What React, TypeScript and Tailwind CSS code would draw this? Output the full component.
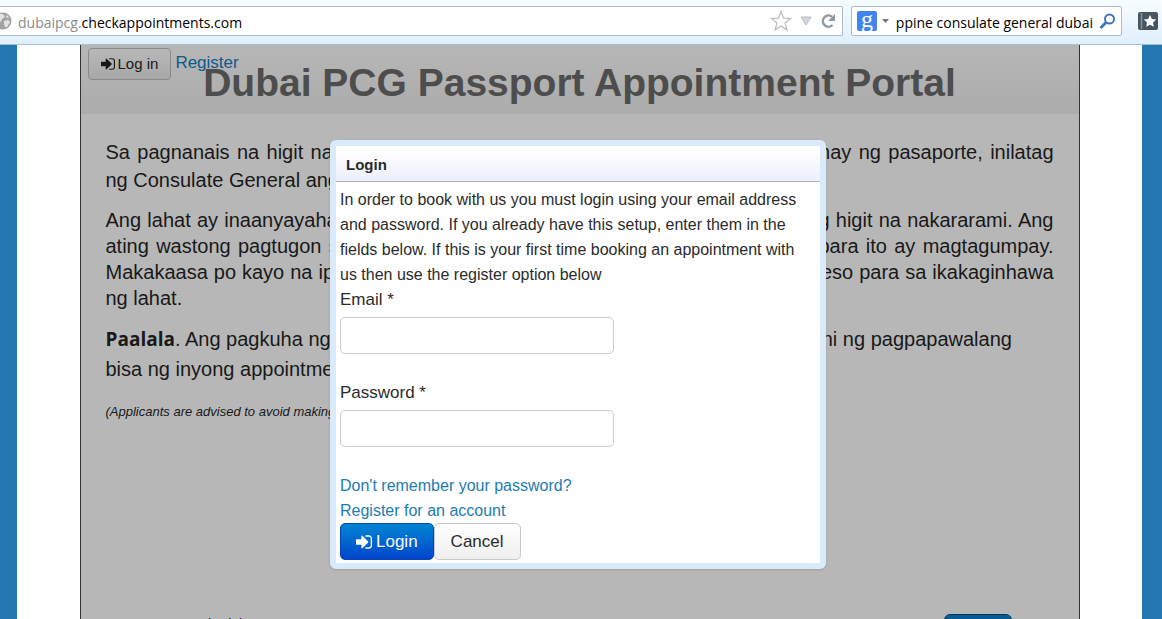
import type { ReactNode } from 'react';

interface IconProps {
    className?: string;
}

function SignInIcon({ className }: IconProps) {
    return (
        <svg viewBox="0 128 1536 1536" fill="currentColor" className={className} aria-hidden="true">
            <path d="M1184 896q0 26-19 45l-544 544q-19 19-45 19t-45-19-19-45v-288h-448q-26 0-45-19t-19-45v-384q0-26 19-45t45-19h448v-288q0-26 19-45t45-19 45 19l544 544q19 19 19 45zm352-352v704q0 119-84.5 203.5t-203.5 84.5h-320q-13 0-22.5-9.5t-9.5-22.5q0-4-1-20t-.5-26.5 3-23.5 10-19.5 20.5-6.5h320q66 0 113-47t47-113v-704q0-66-47-113t-113-47h-312l-11.5-1-11.5-3-8-5.5-7-9-2-13.5q0-4-1-20t-.5-26.5 3-23.5 10-19.5 20.5-6.5h320q119 0 203.5 84.5t84.5 203.5z" />
        </svg>
    );
}

function BrowserBar() {
    return (
        <header className="flex h-[45px] shrink-0 items-start border-b border-[#a9bfd0] bg-linear-to-b from-[#f6fdff] to-[#e0effc] pt-1.5 font-['Open_Sans',sans-serif] text-sm">
            <div className="flex h-[30px] flex-1 items-center rounded-r-xs border border-l-0 border-[#a9bccb] bg-white pr-1.5">
                <svg viewBox="0 0 18 18" className="-ml-1.5 h-[18px] w-[18px] shrink-0" aria-hidden="true">
                    <circle cx="9" cy="9" r="8.5" fill="#a3a3a3" />
                    <path d="M5 2l4 0 2 3-3 2-1 3-3-2-2-3zM10 9l4-1 2 2-3 5-2 0-1-3zM12 3l3 2-1 1-2-1z" fill="#e3e3e3" />
                </svg>
                <span className="ml-1.5 flex-1 pt-1 text-[#8b8b8b]">dubaipcg.<span className="text-black">checkappointments.com</span></span>
                <button aria-label="Bookmark">
                    <svg viewBox="0 0 22 22" className="h-[22px] w-[22px]" fill="#fdfdfd" stroke="#b9bbbd" strokeWidth="1.2">
                        <path d="M11 1.5l2.6 6.6 7 .3-5.5 4.5 1.9 7.1-6-4-6 4 1.9-7.1-5.5-4.5 7-.3z" />
                    </svg>
                </button>
                <button aria-label="History" className="ml-2">
                    <svg viewBox="0 0 12 10" className="h-2.5 w-3" fill="#d3d8de" stroke="#b7bcc4">
                        <path d="M1 1h10l-5 8z" />
                    </svg>
                </button>
                <button aria-label="Reload" className="ml-2">
                    <svg viewBox="0 0 16 16" className="h-4 w-4" fill="none" stroke="#929ba5" strokeWidth="2.5">
                        <path d="M12.5 12a5.6 5.6 0 1 1-.5-8.2" />
                        <path d="M15 1v7H8z" fill="#929ba5" stroke="none" />
                    </svg>
                </button>
            </div>
            <div className="ml-2 flex h-[30px] w-[271px] items-center rounded-xs border border-[#a9bccb] bg-white px-[5px]">
                <span className="flex h-5 w-5 shrink-0 items-center justify-center rounded-xs bg-[#4383f0] pb-1 font-['Liberation_Serif',serif] text-2xl leading-5 text-white">g</span>
                <svg viewBox="0 0 7 4" className="ml-[5px] h-1 w-[7px] shrink-0" fill="#777" aria-hidden="true">
                    <path d="M0 0h7L3.5 4z" />
                </svg>
                <div className="ml-1.5 flex min-w-0 flex-1 justify-end overflow-hidden pt-1 whitespace-nowrap text-black">ppine consulate general dubai</div>
                <button aria-label="Search" className="ml-1.5 shrink-0">
                    <svg viewBox="0 0 17 17" className="h-[17px] w-[17px]" fill="none" stroke="#3c78b4">
                        <circle cx="10.5" cy="6" r="4.5" strokeWidth="2" />
                        <path d="M7 9.5L1.5 15" strokeWidth="3" />
                    </svg>
                </button>
            </div>
            <button aria-label="Bookmarks" className="mt-1.5 ml-4 w-6">
                <svg viewBox="0 0 20 18" className="h-[18px] w-5">
                    <rect width="20" height="18" rx="2" fill="#475562" />
                    <path d="M3.5 1v16" stroke="#8795a2" strokeWidth="1.5" />
                    <path d="M12 3l1.9 4 4.3.5-3.2 3 .8 4.3-3.8-2.1-3.8 2.1.8-4.3-3.2-3 4.3-.5z" fill="#fff" />
                </svg>
            </button>
        </header>
    );
}

interface LineProps {
    start: string;
    gap: string;
    end: string;
}

function JustifiedLine({ start, gap, end }: LineProps) {
    return (
        <span className="block text-justify [text-align-last:justify]">
            {start} <span className={`inline-block ${gap}`} /> {end}
        </span>
    );
}

function PortalPage() {
    return (
        <section className="mx-auto min-h-full max-w-[1000px] border-x border-[#333] bg-[#b7b7b7] text-[#191919]">
            <div className="relative h-[69px] rounded-t-md bg-linear-to-b from-[#b6b6b6] to-[#acacac]">
                <h1 className="pt-4 text-center text-[39px] leading-11 font-bold text-[#4d4d4d]">Dubai PCG Passport Appointment Portal</h1>
                <div className="absolute top-[3px] left-[7px] flex items-start gap-1">
                    <button className="flex h-8 items-center gap-[3px] rounded-sm border border-[#8a8a8a] bg-linear-to-b from-[#b8b8b8] to-[#a8a8a8] px-3 text-[15px]">
                        <SignInIcon className="h-3.5 w-3.5" />
                        Log in
                    </button>
                    <a href="#register" className="pt-[3px] text-[17px] leading-6 text-[#0c5b89]">Register</a>
                </div>
            </div>
            <article className="px-[25px] pt-6 text-xl">
                <p className="leading-7">
                    <JustifiedLine start="Sa pagnanais na higit na" gap="w-[466px]" end="may ng pasaporte, inilatag" />
                    ng Consulate General ang
                </p>
                <p className="mt-[13px] leading-[26px]">
                    <JustifiedLine start="Ang lahat ay inaanyayahan" gap="w-[446px]" end="ng higit na nakararami. Ang" />
                    <JustifiedLine start="ating wastong pagtugon sa" gap="w-[454px]" end="para ito ay magtagumpay." />
                    <JustifiedLine start="Makakaasa po kayo na ip" gap="w-[436px]" end="proseso para sa ikakaginhawa" />
                    ng lahat.
                </p>
                <p className="mt-[13px] leading-[30px]">
                    <b className="font-['Open_Sans',sans-serif] text-[19px]">Paalala</b>. Ang pagkuha ng <span className="inline-block w-[480px]" /> ni ng pagpapawalang
                    <br />
                    bisa ng inyong appointment
                </p>
                <p className="mt-4 text-[13px] leading-6 italic">(Applicants are advised to avoid making</p>
            </article>
            <div className="mt-[190px] flex items-start justify-between pr-[67px] pl-[66px]">
                <a href="#schedule" className="text-sm text-[#14143c]">How to schedule</a>
                <button aria-label="Continue" className="h-9 w-[68px] rounded-md border border-[#05385c] bg-[#075a92]" />
            </div>
        </section>
    );
}

interface FieldProps {
    id: string;
    type: string;
    children: ReactNode;
}

function Field({ id, type, children }: FieldProps) {
    return (
        <div className="mb-[26px]">
            <label htmlFor={id} className="block text-[17px] leading-[25px]">{children} *</label>
            <input id={id} type={type} className="mt-[5px] block h-[37px] w-[274px] rounded-[5px] border border-[#ccc] bg-white px-2" />
        </div>
    );
}

function LoginDialog() {
    return (
        <div role="dialog" aria-labelledby="login-title" className="w-[496px] rounded-md border-6 border-[#d9ebfb] bg-white text-[#2b2b2b] shadow-sm">
            <h2 id="login-title" className="border-b border-[#b4b4bf] bg-linear-to-b from-white from-20% to-[#ebeefc] px-2.5 pt-[7px] pb-[5px] text-[15px] leading-[23px] font-bold">Login</h2>
            <form className="px-1 pt-[5px] pb-[3px] text-base leading-[25px]">
                <p className="pr-3">In order to book with us you must login using your email address and password. If you already have this setup, enter them in the fields below. If this is your first time booking an appointment with us then use the register option below</p>
                <Field id="email" type="email">Email</Field>
                <Field id="password" type="password">Password</Field>
                <a href="#forgot" className="block text-[#1c7cb0]">Don't remember your password?</a>
                <a href="#register" className="block text-[#1c7cb0]">Register for an account</a>
                <div className="flex text-[17px]">
                    <button type="button" className="flex h-[37px] items-center gap-1 rounded-[5px] border border-[#0745b4] bg-linear-to-b from-[#0484d2] to-[#0343cc] px-[15px] text-white">
                        <SignInIcon className="h-4 w-4" />
                        Login
                    </button>
                    <button type="button" className="h-[37px] rounded-[5px] border border-[#c8c8c8] bg-linear-to-b from-white to-[#efefef] px-4">Cancel</button>
                </div>
            </form>
        </div>
    );
}

export default function App() {
    return (
        <div className="flex h-screen flex-col overflow-hidden bg-white font-['Liberation_Sans',Arial,sans-serif]">
            <BrowserBar />
            <main className="relative min-h-0 flex-1 overflow-hidden border-r-20 border-l-17 border-[#2478b0]">
                <PortalPage />
                <div className="absolute inset-x-0 top-[95px] flex justify-center pr-[3px]">
                    <LoginDialog />
                </div>
            </main>
        </div>
    );
}
